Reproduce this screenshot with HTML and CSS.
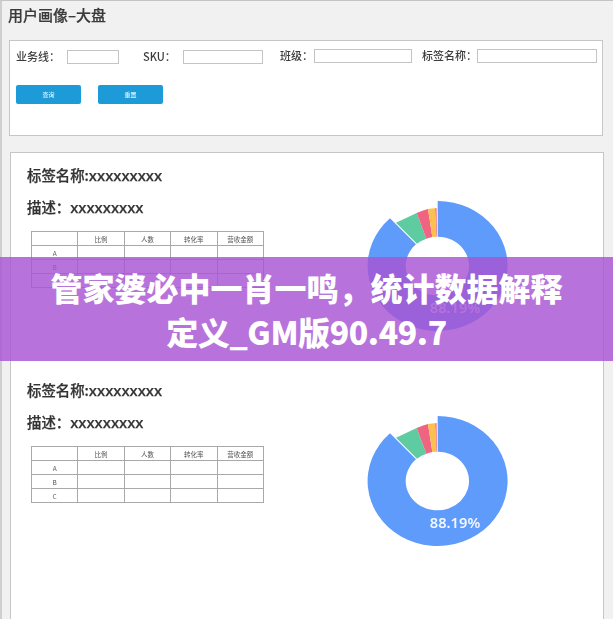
FILE: index.html
```html
<!DOCTYPE html>
<html lang="zh">
<head>
<meta charset="utf-8">
<title>用户画像-大盘</title>
<link rel="stylesheet" href="styles.css">
</head>
<body>
<div class="page">
  <h1 class="page-title">用户画像–大盘</h1>
  <section class="filter">
    <div class="fields">
      <label class="field f1"><span>业务线：</span><i class="input"></i></label>
      <label class="field f2"><span>SKU：</span><i class="input"></i></label>
      <label class="field f3"><span>班级：</span><i class="input"></i></label>
      <label class="field f4"><span>标签名称：</span><i class="input"></i></label>
    </div>
    <div class="buttons">
      <button class="btn">查询</button>
      <button class="btn">重置</button>
    </div>
  </section>
  <section class="reports">
    <article class="report">
      <div class="info">
        <h2 class="tag">标签名称:<span class="x">xxxxxxxxx</span></h2>
        <p class="desc">描述：<span class="x">xxxxxxxxx</span></p>
        <table class="grid">
          <tr><th></th><th>比例</th><th>人数</th><th>转化率</th><th>营收金额</th></tr>
          <tr><td>A</td><td></td><td></td><td></td><td></td></tr>
          <tr><td>B</td><td></td><td></td><td></td><td></td></tr>
          <tr><td>C</td><td></td><td></td><td></td><td></td></tr>
        </table>
      </div>
      <svg class="donut" viewBox="0 0 600 480" aria-label="环形图">
        <path class="s-blue" d="M293 48A210 195 0 1 1 150 100L228 178A95 88 0 1 0 293 155Z"/>
        <path class="s-green" d="M168 113L230 84L259 161A95 88 0 0 0 231 176Z"/>
        <path class="s-red" d="M230 84Q247 76 264 72L277 156Q268 158 259 161Z"/>
        <path class="s-orange" d="M264 72Q275 70 285 70L289 155Q283 155 277 156Z"/>
        <path class="s-rose" d="M285 70L290 69L291 155L289 155Z"/>
        <text class="pct" x="345" y="384">88.19%</text>
      </svg>
    </article>
    <article class="report">
      <div class="info">
        <h2 class="tag">标签名称:<span class="x">xxxxxxxxx</span></h2>
        <p class="desc">描述：<span class="x">xxxxxxxxx</span></p>
        <table class="grid">
          <tr><th></th><th>比例</th><th>人数</th><th>转化率</th><th>营收金额</th></tr>
          <tr><td>A</td><td></td><td></td><td></td><td></td></tr>
          <tr><td>B</td><td></td><td></td><td></td><td></td></tr>
          <tr><td>C</td><td></td><td></td><td></td><td></td></tr>
        </table>
      </div>
      <svg class="donut" viewBox="0 0 600 480" aria-label="环形图">
        <path class="s-blue" d="M293 48A210 195 0 1 1 150 100L228 178A95 88 0 1 0 293 155Z"/>
        <path class="s-green" d="M168 113L230 84L259 161A95 88 0 0 0 231 176Z"/>
        <path class="s-red" d="M230 84Q247 76 264 72L277 156Q268 158 259 161Z"/>
        <path class="s-orange" d="M264 72Q275 70 285 70L289 155Q283 155 277 156Z"/>
        <path class="s-rose" d="M285 70L290 69L291 155L289 155Z"/>
        <text class="pct" x="345" y="384">88.19%</text>
      </svg>
    </article>
  </section>
</div>
<div class="banner">
  <p class="banner-text">管家婆必中一肖一鸣，统计数据解释<br><span class="banner-line">定义_GM版90.49.7</span></p>
</div>
</body>
</html>
```
FILE: styles.css
```css
* { box-sizing: border-box; }
html, body { margin: 0; padding: 0; }
body {
  position: relative;
  width: 613px;
  height: 619px;
  overflow: hidden;
  background: #f1f1f1;
  font-family: "Noto Sans CJK SC", "Liberation Sans", sans-serif;
  color: #333;
}
.page {
  height: 619px;
  padding-left: 8px;
  border-top: 1px solid #c4c4c4;
  border-left: 2px solid #cfcfcf;
  filter: blur(0.45px);
}
.page-title {
  margin: 0;
  height: 39px;
  margin-left: -2px;
  padding-top: 4px;
  font-size: 15px;
  line-height: 20px;
  font-weight: 500;
  color: #3a3a3a;
  -webkit-text-stroke: 0.2px #3a3a3a;
}
.filter {
  width: 594px;
  height: 96px;
  margin-left: -1px;
  background: #fff;
  border: 1px solid #c6c6c6;
  padding: 8px 0 0 6px;
}
.fields { display: flex; height: 15px; align-items: center; }
.field { display: flex; align-items: center; font-size: 11px; line-height: 13px; font-weight: 500; color: #3c3c3c; }
.field span { display: block; white-space: nowrap; }
.input { display: block; height: 14px; background: #fff; border: 1px solid #c4c4c4; }
.f1 span { width: 51px; }
.f1 .input { width: 52px; }
.f2 { margin-left: 24px; }
.f2 span { width: 40px; }
.f2 .input { width: 80px; }
.f3 { margin-left: 17px; margin-top: -2px; }
.f3 span { width: 34px; }
.f3 .input { width: 98px; }
.f4 { margin-left: 10px; margin-top: -2px; }
.f4 span { width: 55px; }
.f4 .input { width: 120px; }
.buttons { display: flex; gap: 17px; margin-top: 21px; }
.btn {
  width: 65px;
  height: 19px;
  padding: 0;
  border: 0;
  border-radius: 2px;
  background: #1c9bd8;
  color: #dff3ff;
  font-family: inherit;
  font-size: 6px;
  font-weight: 500;
}
.reports {
  width: 594px;
  height: 470px;
  margin-top: 16px;
  background: #fff;
  border-top: 1px solid #c6c6c6;
  border-left: 1px solid #c6c6c6;
  border-right: 1px solid #c6c6c6;
  padding-left: 16px;
}
.report { display: flex; height: 215px; }
.info { width: 313px; padding-top: 12px; }
.tag, .desc {
  margin: 0;
  font-size: 14.4px;
  line-height: 20px;
  font-weight: 500;
  color: #333;
  white-space: nowrap;
  -webkit-text-stroke: 0.25px #333;
}
.desc { margin-top: 12px; }
.x { font-family: "Noto Sans", "Liberation Sans", sans-serif; font-size: 15px; font-weight: 500; }
.grid {
  width: 233px;
  height: 57px;
  margin: 14px 0 0 4px;
  border-collapse: collapse;
  table-layout: fixed;
  color: #555;
}
.grid th, .grid td {
  height: 14px;
  padding: 0;
  border: 1px solid #a9a9a9;
  font-family: "Noto Sans CJK SC", "Liberation Sans", sans-serif;
  font-size: 6.5px;
  line-height: 8px;
  font-weight: 400;
  text-align: center;
}
.donut { display: block; width: 200px; height: 160px; margin-top: 32px; flex: none; }
.s-blue { fill: #5f9bfb; }
.s-green { fill: #5ecba0; }
.s-red { fill: #ef6480; }
.s-orange { fill: #fcc04f; }
.s-rose { fill: #e9828f; }
.pct {
  fill: #f2f6ff;
  font-family: "Noto Sans", "Liberation Sans", sans-serif;
  font-size: 44px;
  font-weight: 600;
  text-anchor: middle;
}
.banner {
  position: absolute;
  left: 0;
  top: 257px;
  width: 613px;
  height: 104px;
  background: rgba(167, 84, 211, 0.82);
  display: flex;
  align-items: center;
  justify-content: center;
}
.banner-text {
  margin: 0;
  width: 100%;
  text-align: center;
  font-family: "Noto Sans CJK SC", sans-serif;
  font-size: 32px;
  line-height: 44px;
  font-weight: 900;
  color: #fff;
}
.banner-line { letter-spacing: -0.4px; }
```
